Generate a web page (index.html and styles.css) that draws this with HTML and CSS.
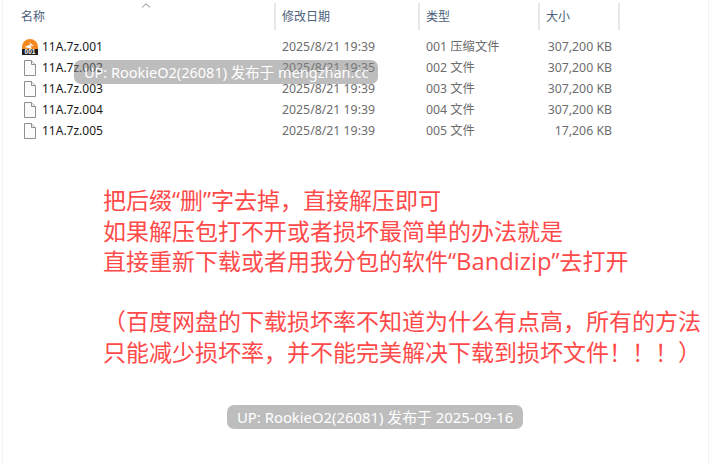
FILE: index.html
```html
<!DOCTYPE html>
<html lang="en">
<head>
    <meta charset="UTF-8">
    <meta name="viewport" content="width=device-width, initial-scale=1.0">
    <title>11A.7z</title>
    <link rel="stylesheet" href="styles.css">
</head>
<body>
    <div class="sheet">
        <div class="sort-arrow">
            <svg width="10" height="5" viewBox="0 0 10 5"><path d="M1 4.5 5 .8 9 4.5" fill="none" stroke="#8a8a8a"/></svg>
        </div>
        <div class="files-head">
            <div class="head-cell">名称</div>
            <div class="head-cell">修改日期</div>
            <div class="head-cell">类型</div>
            <div class="head-cell">大小</div>
        </div>

        <div class="files">
            <div class="file-row">
                <div class="file-name">
                    <svg class="file-icon" width="16" height="16" viewBox="0 0 16 16">
                        <path d="M0 10V8a8 8 0 0 1 16 0v2z" fill="#f5891f"/>
                        <path d="M2.5 8 8.500 5.500 7 3l5 4-3.500-.5L10 10z" fill="#fff"/>
                        <rect y="10" width="16" height="6" fill="#1d1d1d"/>
                        <text x="8" y="15.400" class="icon-label">001</text>
                    </svg>
                    <span>11A.7z.001</span>
                </div>
                <div class="file-date">2025/8/21 19:39</div>
                <div class="file-type">001 压缩文件</div>
                <div class="file-size">307,200 KB</div>
            </div>
            <div class="file-row">
                <div class="file-name">
                    <svg class="file-icon" width="16" height="16" viewBox="0 0 16 16"><path d="M2.5.5h7l4 4v11h-11z" fill="#fbfbfb" stroke="#8f8f8f"/><path d="M9.5.5v4h4" fill="#eee" stroke="#8f8f8f"/></svg>
                    <span>11A.7z.002</span>
                </div>
                <div class="file-date">2025/8/21 19:35</div>
                <div class="file-type">002 文件</div>
                <div class="file-size">307,200 KB</div>
            </div>
            <div class="file-row">
                <div class="file-name">
                    <svg class="file-icon" width="16" height="16" viewBox="0 0 16 16"><path d="M2.5.5h7l4 4v11h-11z" fill="#fbfbfb" stroke="#8f8f8f"/><path d="M9.5.5v4h4" fill="#eee" stroke="#8f8f8f"/></svg>
                    <span>11A.7z.003</span>
                </div>
                <div class="file-date">2025/8/21 19:39</div>
                <div class="file-type">003 文件</div>
                <div class="file-size">307,200 KB</div>
            </div>
            <div class="file-row">
                <div class="file-name">
                    <svg class="file-icon" width="16" height="16" viewBox="0 0 16 16"><path d="M2.5.5h7l4 4v11h-11z" fill="#fbfbfb" stroke="#8f8f8f"/><path d="M9.5.5v4h4" fill="#eee" stroke="#8f8f8f"/></svg>
                    <span>11A.7z.004</span>
                </div>
                <div class="file-date">2025/8/21 19:39</div>
                <div class="file-type">004 文件</div>
                <div class="file-size">307,200 KB</div>
            </div>
            <div class="file-row">
                <div class="file-name">
                    <svg class="file-icon" width="16" height="16" viewBox="0 0 16 16"><path d="M2.5.5h7l4 4v11h-11z" fill="#fbfbfb" stroke="#8f8f8f"/><path d="M9.5.5v4h4" fill="#eee" stroke="#8f8f8f"/></svg>
                    <span>11A.7z.005</span>
                </div>
                <div class="file-date">2025/8/21 19:39</div>
                <div class="file-type">005 文件</div>
                <div class="file-size">17,206 KB</div>
            </div>
        </div>

        <div class="note">
            <p>把后缀“删”字去掉，直接解压即可</p>
            <p>如果解压包打不开或者损坏最简单的办法就是</p>
            <p>直接重新下载或者用我分包的软件“<span class="note-latin">Bandizip</span>”去打开</p>
            <p class="note-gap">（百度网盘的下载损坏率不知道为什么有点高，所有的方法</p>
            <p>只能减少损坏率，并不能完美解决下载到损坏文件！！！）</p>
        </div>

        <div class="stamp stamp-top">UP: RookieO2(26081) 发布于 mengzhan.cc</div>
        <div class="stamp stamp-bottom">UP: RookieO2(26081) 发布于 2025-09-16</div>
    </div>
</body>
</html>
```

FILE: styles.css
```css
* {
    box-sizing: border-box;
}
body {
    margin: 0;
    background-color: white;
    font-family: "Noto Sans", "Noto Sans CJK SC", sans-serif;
}
.sheet {
    position: relative;
    width: 707px;
    height: 465px;
    margin-left: 2px;
    padding-top: 3px;
    border-left: 1px solid #f2f2f2;
    border-right: 1px solid #f2f2f2;
    overflow: hidden;
}
.sort-arrow {
    position: absolute;
    top: 2px;
    left: 138px;
    line-height: 0;
}
.files-head {
    display: grid;
    grid-template-columns: 273px 144px 120px 80px;
    height: 27px;
}
.head-cell {
    padding: 5px 0 0 6px;
    border-right: 2px solid #e8e8e8;
    font-size: 12px;
    line-height: 18px;
    color: #4c607a;
}
.head-cell:first-child {
    padding-left: 18px;
}
.files {
    margin-top: 6px;
}
.file-row {
    display: grid;
    grid-template-columns: 273px 144px 120px 72px;
    height: 21px;
    align-items: center;
    font-size: 12.3px;
    line-height: 16px;
    color: #6d6d6d;
}
.file-name {
    display: flex;
    align-items: center;
    gap: 4px;
    padding-left: 19px;
    font-size: 12px;
    color: #1a1a1a;
}
.file-icon {
    flex: none;
}
.icon-label {
    font-family: "Liberation Sans", sans-serif;
    font-size: 6.500px;
    font-weight: bold;
    fill: white;
    text-anchor: middle;
}
.file-date,
.file-type {
    padding-left: 6px;
}
.file-size {
    text-align: right;
}
.note {
    margin-top: 44px;
    padding-left: 100px;
    font-family: "Open Sans", "Noto Sans CJK SC", sans-serif;
    font-size: 23px;
    line-height: 30.5px;
    color: #ff4a4a;
    white-space: nowrap;
}
.note p {
    margin: 0;
}
.note .note-gap {
    margin-top: 29.500px;
}
.note-latin {
    font-size: 23.8px;
}
.stamp {
    position: absolute;
    height: 24px;
    padding: 0 10px;
    border-radius: 7px;
    background-color: rgba(128, 128, 128, 0.52);
    line-height: 24px;
    color: white;
    white-space: nowrap;
}
.stamp-top {
    top: 60px;
    left: 71px;
    font-size: 14.5px;
}
.stamp-bottom {
    top: 405px;
    left: 224px;
    font-size: 14.85px;
}
```
